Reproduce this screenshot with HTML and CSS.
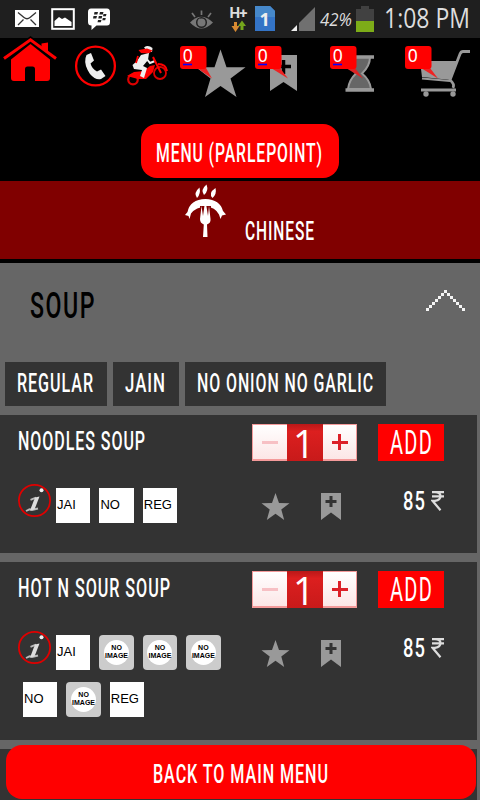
FILE: index.html
```
<!DOCTYPE html>
<html lang="en">
<head>
<meta charset="utf-8">
<title>Menu</title>
<link rel="stylesheet" href="styles.css">
</head>
<body>
<svg class="defs" width="0" height="0">
  <symbol id="star" viewBox="0 0 29 28"><path d="M14.5 0 18 10 28.5 10.2 20.3 16.6 23.2 27 14.5 20.8 5.8 27 8.7 16.6 .5 10.2 11 10Z" fill="#999"/></symbol>
  <symbol id="mark" viewBox="0 0 20 27"><path d="M0 0H20V27L10 19.5 0 27Z" fill="#999"/><path d="M10 3V14M4.5 8.5H15.5" stroke="#333" stroke-width="3"/></symbol>
  <symbol id="info" viewBox="0 0 33 33"><circle cx="16.500" cy="16.500" r="15.600" fill="none" stroke="#e00000" stroke-width="1.800"/><path d="M12.500 15.800 18 13.600M8 27 11.500 25.300 14 26 20 24.500" fill="none" stroke="#bbb" stroke-width="1.900"/><path d="M17 13.500 21.500 12.500 16.500 25.500 12 26.500Z" fill="#ddd"/><circle cx="23.500" cy="6.200" r="2" fill="#eee"/></symbol>
  <symbol id="rupee" viewBox="0 0 13 20"><path d="M1 1.200H13M1 5.400H13M1 1.200H4Q9.500 1.500 9.500 5.200T4 9.800H1.500L9.500 19.300" fill="none" stroke="#ddd" stroke-width="2.200"/></symbol>
</svg>

<header class="status">
  <svg width="480" height="38" viewBox="0 0 480 38">
    <rect x="15" y="10" width="24" height="17" fill="#fff"/><path d="M18 12.500 24 17.500Q27 20 30 17.500L36 12.500M18 25 23.500 19.500M36 25 30.500 19.500" fill="none" stroke="#333" stroke-width="1.300"/>
    <rect x="52.200" y="9.200" width="21.600" height="19.600" fill="none" stroke="#fff" stroke-width="2"/><path d="M54.500 26V21L59 17 62 19 65 17.500 71.500 22V26Z" fill="#fff"/>
    <path d="M91 8.500H107Q110 8.500 110 12V22Q110 25.500 107 25.500H96.500L91.500 30V25.500Q88 25.500 88 22V12Q88 8.500 91 8.500Z" fill="#fff"/>
    <path d="M94.500 12H98L97.300 14.500H94ZM100 12H103.500L102.800 14.500H99.300ZM93.500 16H97L96.300 18.500H93ZM98.800 16H102.300L101.600 18.500H98.300ZM103.500 14H106.500L105.900 16.300H103ZM98 20H101.500L100.800 22.300H97.500ZM102.800 18H105.800L105.200 20.300H102.300Z" fill="#222"/>
    <path d="M190 22.500Q201 11 213 22.500Q201 34.500 190 22.500Z" fill="#777"/><circle cx="201.500" cy="22.500" r="4.800" fill="none" stroke="#222" stroke-width="1.500"/><path d="M201.500 10.500V15M192 13 195 17M211 13 208 17M199 19 202 23" stroke="#777" stroke-width="1.700"/>
    <text x="229.500" y="17.500" class="hplus" textLength="18">H+</text>
    <path d="M234 22H237V26H239.500L235.500 32 231.500 26H234Z" fill="#d88a32"/><path d="M240.500 30H243.500V26H246L242 20.500 238 26H240.500Z" fill="#74a61c"/>
    <path d="M255 6H270L275 11V31H255Z" fill="#3474c6"/><path d="M255 6H270L275 11V17H255Z" fill="#4688ca"/>
    <text x="259.500" y="26" class="sim">1</text>
    <path d="M299 31V23L315 7V31Z" fill="#707070"/><path d="M291 31 297 25V31Z" fill="#eee"/>
    <text x="320" y="26" class="hand small" textLength="32" lengthAdjust="spacingAndGlyphs">42%</text>
    <path d="M356 9H361V6H369V9H374V32H356Z" fill="#414141"/><path d="M356 21H374V32H356Z" fill="#7dac18"/>
    <text x="384" y="28" class="hand" textLength="86" lengthAdjust="spacingAndGlyphs">1:08 PM</text>
  </svg>
</header>

<nav class="tools">
  <svg viewBox="0 38 65 62"><path d="M30.500 44 50 59.500V78Q50 81 47 81H35V69Q35 66.500 32.500 66.500H27.500Q25 66.500 25 69V81H14Q11 81 11 78V59.500Z" fill="red"/><path d="M4 59 30.500 39.500 56 59" fill="none" stroke="#000" stroke-width="5.500"/><path d="M4 58.500 30.500 39.800 56 58.500" fill="none" stroke="red" stroke-width="3"/><path d="M41.500 43.500 48 42.500V52L41.500 47Z" fill="red"/></svg>
  <svg viewBox="65 38 58 62"><circle cx="95.500" cy="66" r="19.400" fill="none" stroke="red" stroke-width="2.300"/><path d="M86.500 55 91 53 94 60.500 90.500 63.500Q92 69 97 71.500L101 69.500 105.500 76 101 79Q95.500 80.500 90 74 84 65 85.500 58Z" fill="#eee"/></svg>
  <svg viewBox="123 38 57 62"><circle cx="133" cy="79.500" r="4.800" fill="none" stroke="#d00" stroke-width="2.200"/><circle cx="160" cy="73" r="6" fill="none" stroke="#d00" stroke-width="1.800"/><path d="M127 76 134 72 144 71 150 66 155 65 153 72 146 79 138 79Z" fill="red"/><path d="M144 47.500Q148 44.500 152.500 48L152 52 147 51Z" fill="#eee"/><path d="M138.500 50 147 48.500 152.500 50.500 149 53.500 141 53Z" fill="red"/><path d="M141 55 149 53 148 60 143 66 147 68 144 78 140 76 142 70 134 69 132.500 65 137 61Z" fill="#eee"/><path d="M146 58 150 63 155 61" fill="none" stroke="#eee" stroke-width="2"/><path d="M138 56 136 63" stroke="red" stroke-width="1.800"/><path d="M153 57 161 73M158 64Q166 64 167 71" fill="none" stroke="red" stroke-width="2"/></svg>
  <svg viewBox="180 38 75 62"><path d="M220.500 49.500 226.500 67.300H245.500L230.500 78.500 236.500 97 220.500 86 205 97 210.500 78.500 196 67.300H214.500Z" fill="#999"/><path d="M197 68 212 78.500 206 68Z" fill="#e22"/><rect x="180" y="46" width="26.500" height="23" rx="3" fill="red"/><text x="182.800" y="62.200" class="count">0</text><path d="M183 64.500H192" stroke="#00f" stroke-width="1.600"/></svg>
  <svg viewBox="255 38 75 62"><path d="M270 55H297V91L283.500 82 270 91Z" fill="#999"/><path d="M283.500 60V74M276 66.500H291" stroke="#000" stroke-width="3.500"/><path d="M271 68 288 78.500 280 68Z" fill="#e22"/><rect x="255" y="46" width="26.500" height="23" rx="3" fill="red"/><text x="257.800" y="62.200" class="count">0</text><path d="M258 64.500H267" stroke="#00f" stroke-width="1.600"/></svg>
  <svg viewBox="330 38 75 62"><path d="M348 57H370Q370 66 362 73.500 370 80 371 89H348Q349 80 356 73.500 348 66 348 57Z" fill="#666" stroke="#999" stroke-width="2"/><path d="M346 57H374M345.500 90H374" stroke="#999" stroke-width="3.500"/><path d="M346 68 363 78.500 355 68Z" fill="#d22"/><rect x="330" y="46" width="26.500" height="23" rx="3" fill="red"/><text x="332.800" y="62.200" class="count">0</text><path d="M333 64.500H342" stroke="#00f" stroke-width="1.600"/></svg>
  <svg viewBox="405 38 75 62"><path d="M420 61H457L451 80 422 77Z" fill="#999"/><path d="M470 51.500H463Q461 51.500 460 54L450 80Q455 84 453 88" fill="none" stroke="#999" stroke-width="2.800"/><path d="M422 78.500 450 81" stroke="#999" stroke-width="2"/><path d="M421 90H456" stroke="#999" stroke-width="3"/><circle cx="426" cy="94" r="2.700" fill="#999"/><circle cx="453" cy="94" r="2.700" fill="#999"/><path d="M421 68 438 78.500 430 68Z" fill="#e22"/><rect x="405" y="46" width="26.500" height="23" rx="3" fill="red"/><text x="407.800" y="62.200" class="count">0</text></svg>
</nav>

<div class="branch"><a class="pill branch-pill"><svg width="168" height="26"><text x="0" y="21.500" class="t" textLength="167" lengthAdjust="spacingAndGlyphs">MENU (PARLEPOINT)</text></svg></a></div>

<section class="cuisine">
  <svg class="cuisine-icon" width="42" height="55" viewBox="185 183 42 55"><path d="M187.500 212Q190 199.500 205.500 199 220 199.500 223 211L226 214.500 222 215.500 220.500 219 219 214.500Q215 207 206 206.500 196 207 191 213.500L189.500 219 188.500 216 185 215Z" fill="#fff"/><path d="M199.500 187.500Q193 193 197 198 201 194 199.500 187.500ZM206.500 184.500Q200 190 204 195 209 191 206.500 184.500ZM215.500 188Q208 193 212.500 198 217 194 215.500 188Z" fill="#fff"/><path d="M200 206H211L210.500 214H200.500Z" fill="#800000"/><path d="M201.500 206 200 219Q200 223 203.800 224.500L203 237H207.500L207 224.500Q211 223 210.500 219L209 206 208 216 206.300 205.500H204.500L203 216Z" fill="#fff"/></svg>
  <svg width="70" height="26"><text x="0" y="22" class="t" textLength="70" lengthAdjust="spacingAndGlyphs">CHINESE</text></svg>
</section>

<main class="list">
  <div class="group">
    <svg width="66" height="34"><text x="0" y="30.500" class="t soup" textLength="66" lengthAdjust="spacingAndGlyphs">SOUP</text></svg>
    <svg width="41" height="24" viewBox="425 289 41 24"><path d="M427.500 309.500h0M430.500 306.500h0M433.500 303.500h0M436.500 300.500h0M439.500 297.500h0M442.500 294.500h0M445.500 291.500h0M448.500 294.500h0M451.500 297.500h0M454.500 300.500h0M457.500 303.500h0M460.500 306.500h0M463.500 309.500h0" stroke="#f4f4f4" stroke-width="3" stroke-linecap="square"/></svg>
  </div>
  <div class="tags">
    <span class="tag"><svg width="77" height="26"><text x="0" y="22" class="t" textLength="77" lengthAdjust="spacingAndGlyphs">REGULAR</text></svg></span>
    <span class="tag"><svg width="41" height="26"><text x="0" y="22" class="t" textLength="41" lengthAdjust="spacingAndGlyphs">JAIN</text></svg></span>
    <span class="tag"><svg width="176" height="26"><text x="0" y="22" class="t" textLength="177" lengthAdjust="spacingAndGlyphs">NO ONION NO GARLIC</text></svg></span>
  </div>

  <article class="card">
    <div class="top">
      <svg class="name" width="234" height="37"><text x="0" y="26" class="t" textLength="128" lengthAdjust="spacingAndGlyphs">NOODLES SOUP</text></svg>
      <div class="stepper"><span class="key minus"></span><span class="qty"><svg width="36" height="37"><text x="6" y="34" class="one">1</text></svg></span><span class="key plus"></span></div>
      <div class="add"><svg width="42" height="37"><text x="0" y="30" class="t addtext" textLength="43" lengthAdjust="spacingAndGlyphs">ADD</text></svg></div>
    </div>
    <div class="bottom">
      <div class="kinds">
        <div class="row first"><svg class="info" width="33" height="33"><use href="#info"/></svg><span class="chip">JAI</span><span class="chip">NO</span><span class="chip">REG</span></div>
      </div>
      <svg class="fav" width="29" height="28"><use href="#star"/></svg>
      <svg class="save" width="20" height="27"><use href="#mark"/></svg>
      <div class="price"><svg width="23" height="22"><text x="0" y="19" class="t" textLength="23" lengthAdjust="spacingAndGlyphs">85</text></svg><svg width="13" height="20"><use href="#rupee"/></svg></div>
    </div>
  </article>

  <article class="card tall">
    <div class="top">
      <svg class="name" width="234" height="37"><text x="0" y="26" class="t" textLength="153" lengthAdjust="spacingAndGlyphs">HOT N SOUR SOUP</text></svg>
      <div class="stepper"><span class="key minus"></span><span class="qty"><svg width="36" height="37"><text x="6" y="34" class="one">1</text></svg></span><span class="key plus"></span></div>
      <div class="add"><svg width="42" height="37"><text x="0" y="30" class="t addtext" textLength="43" lengthAdjust="spacingAndGlyphs">ADD</text></svg></div>
    </div>
    <div class="bottom">
      <div class="kinds">
        <div class="row first"><svg class="info" width="33" height="33"><use href="#info"/></svg><span class="chip">JAI</span><span class="chip none"><b>NO<br>IMAGE</b></span><span class="chip none"><b>NO<br>IMAGE</b></span><span class="chip none"><b>NO<br>IMAGE</b></span></div>
        <div class="row second"><span class="chip">NO</span><span class="chip none"><b>NO<br>IMAGE</b></span><span class="chip">REG</span></div>
      </div>
      <svg class="fav" width="29" height="28"><use href="#star"/></svg>
      <svg class="save" width="20" height="27"><use href="#mark"/></svg>
      <div class="price"><svg width="23" height="22"><text x="0" y="19" class="t" textLength="23" lengthAdjust="spacingAndGlyphs">85</text></svg><svg width="13" height="20"><use href="#rupee"/></svg></div>
    </div>
  </article>
  <article class="card"></article>
</main>

<a class="pill back"><svg width="176" height="26"><text x="0" y="22" class="t" textLength="176" lengthAdjust="spacingAndGlyphs">BACK TO MAIN MENU</text></svg></a>
</body>
</html>
```
FILE: styles.css
```
* { box-sizing: border-box; }
html, body { margin: 0; height: 800px; overflow: hidden; background: #000; }
body { width: 480px; font-family: "Liberation Sans", sans-serif; }
svg { display: block; flex: none; overflow: visible; }
.defs { position: absolute; }

.t { font: 500 26px Roboto, sans-serif; letter-spacing: 1.5px; fill: #fff; }
.soup { font-size: 37.5px; letter-spacing: 2.5px; fill: #000; }
.addtext { font-size: 32.5px; font-weight: 400; letter-spacing: 2px; }
.one { font: 400 38px "Open Sans", sans-serif; fill: #fff; }
.count { font: 400 17.5px "Noto Sans", sans-serif; fill: #fff; }
.hplus { font: 700 15px Roboto, sans-serif; fill: #ddd; }
.sim { font: 700 18px "Open Sans", sans-serif; fill: #eee; }
.hand { font: 400 27px "Open Sans", sans-serif; fill: #ddd; }
.hand.small { font-size: 18px; font-style: italic; }

.status { height: 38px; background: #1f1f1f; }
.tools { display: grid; grid-template-columns: 65px 58px 57px repeat(4, 75px); height: 62px; }
.tools svg { width: 100%; height: 62px; }

.pill { display: flex; align-items: center; justify-content: center; background: #f00; border-radius: 16px; }
.branch { display: flex; justify-content: center; height: 81px; padding-top: 24px; }
.branch-pill { width: 198px; height: 54px; padding-top: 3px; }

.cuisine { display: flex; height: 78px; padding: 2px 0 0 185px; background: #800000; }
.cuisine-icon { margin-right: 18px; }
.cuisine > svg:last-child { margin-top: 35px; }

.list { height: 537px; margin-top: 4px; background: #666; overflow: hidden; }
.group { display: flex; justify-content: space-between; height: 99px; padding: 24px 14px 0 30px; }
.group svg:last-child { margin-top: 2px; }
.tags { display: flex; gap: 6px; height: 53px; padding-left: 5px; }
.tag { height: 44px; padding: 8px 13px 0 12px; background: #333; }

.card { width: 477px; height: 138px; margin-bottom: 9px; padding: 9px 0 0 18px; background: #333; }
.card.tall { height: 178px; }
.top { display: flex; height: 37px; }
.stepper { display: flex; width: 105px; height: 37px; margin-right: 21px; border: 1px solid #f49a9a; border-width: 1px 1px 2px; background: linear-gradient(#fff, #fce6e6); }
.key { display: flex; align-items: center; justify-content: center; width: 34px; position: relative; }
.qty { width: 36px; margin: -1px 0 -2px; background: linear-gradient(#b91818, #dc1f1f 20%, #c81a1a); }
.minus::before, .plus::before, .plus::after { content: ""; width: 16px; height: 3px; background: #f7c0c4; }
.plus::before { background: #dc2028; }
.plus::after { position: absolute; width: 3px; height: 16px; background: #dc2028; }
.plus { width: 33px; }
.add { display: flex; justify-content: center; width: 66px; height: 37px; background: #f00; }

.bottom { display: flex; padding-top: 23px; }
.kinds { width: 243px; }
.row { display: flex; gap: 9px; }
.info { margin-right: -4px; }
.row.second { margin: 12px 0 0 5px; }
.row.first .chip { margin-top: 4px; }
.chip { width: 34.4px; height: 35px; padding-left: 1px; background: #fff; color: #000; font-size: 13px; line-height: 33px; }
.none { display: flex; align-items: center; justify-content: center; padding: 0; border-radius: 4px; background: #ccc; }
.none b { width: 25px; height: 25px; padding-top: 4px; border-radius: 50%; background: #fff; font-size: 7px; line-height: 8px; text-align: center; white-space: nowrap; }
.fav { margin-top: 9px; }
.save { margin: 9px 0 0 31px; }
.price { display: flex; gap: 5px; margin: 7px 0 0 62px; }

.back { position: fixed; left: 6px; top: 745px; width: 470px; height: 54px; padding-top: 4px; }
```
